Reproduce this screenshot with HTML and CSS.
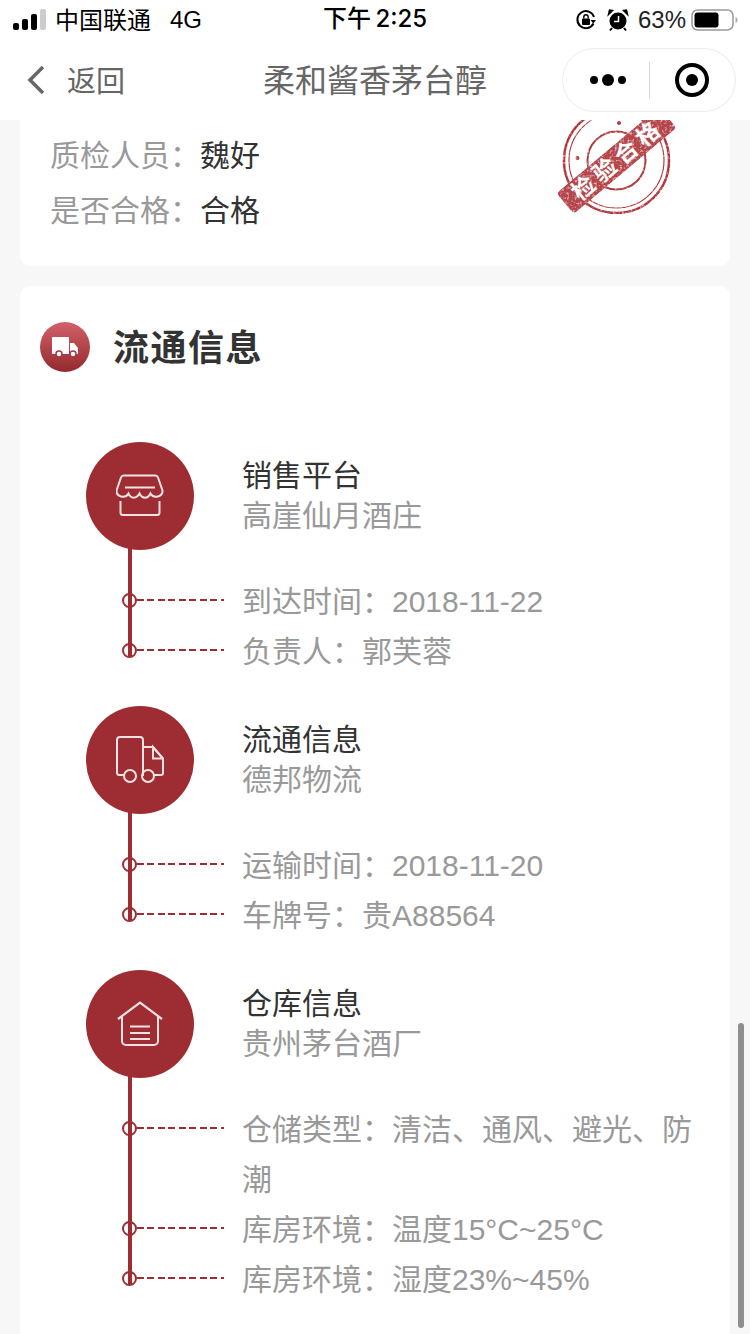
FILE: index.html
```html
<!DOCTYPE html>
<html lang="zh-CN">
<head>
    <meta charset="UTF-8">
    <meta name="viewport" content="width=device-width, initial-scale=1.0">
    <title>柔和酱香茅台醇</title>
    <link rel="stylesheet" href="styles.css">
</head>
<body>
<div class="page">
    <!-- Status bar + nav -->
    <header class="top">
        <div class="status">
            <div class="status-left">
                <svg class="signal" width="34" height="22" viewBox="0 0 34 22">
                    <rect x="0" y="14" width="6" height="7" rx="2" fill="#000"/>
                    <rect x="9" y="10" width="6" height="11" rx="2" fill="#000"/>
                    <rect x="18" y="5" width="6" height="16" rx="2" fill="#000"/>
                    <rect x="27" y="0" width="6" height="21" rx="2" fill="#ccc"/>
                </svg>
                <span class="carrier">中国联通</span>
                <span class="net">4G</span>
            </div>
            <div class="status-time">下午 2:25</div>
            <div class="status-right">
                <svg width="22" height="22" viewBox="0 0 22 22" fill="none">
                    <path d="M18.5 14.5A8.5 8.5 0 1 1 19 8" stroke="#000" stroke-width="2"/>
                    <path d="M15.5 11h5.5l-2.7 3.6z" fill="#000"/>
                    <rect x="7" y="9.5" width="8" height="6.5" rx="1" fill="#000"/>
                    <path d="M8.8 9.5V8a2.2 2.2 0 0 1 4.4 0v1.5" stroke="#000" stroke-width="1.4"/>
                </svg>
                <svg class="alarm" width="24" height="24" viewBox="0 0 24 24" fill="none">
                    <circle cx="12" cy="13" r="8.5" fill="#000"/>
                    <path d="M2.5 6.5L6.5 2.5L3.5 2zM21.5 6.5L17.5 2.5L20.5 2z" fill="#000" stroke="#000" stroke-width="1.5"/>
                    <path d="M6 20l-2 2.5M18 20l2 2.5" stroke="#000" stroke-width="2"/>
                    <path d="M12.5 8v5.5H8" stroke="#fff" stroke-width="1.5"/>
                </svg>
                <span class="pct">63%</span>
                <svg width="47" height="22" viewBox="0 0 47 22" fill="none">
                    <rect x="1" y="1" width="41" height="20" rx="5.5" stroke="#999" stroke-width="1.5"/>
                    <rect x="3.5" y="3.5" width="24" height="15" rx="3" fill="#000"/>
                    <path d="M44.5 8v6c1.5-.6 2-1.8 2-3s-.5-2.400-2-3z" fill="#aaa"/>
                </svg>
            </div>
        </div>
        <nav class="nav">
            <div class="back">
                <svg width="20" height="30" viewBox="0 0 20 30" fill="none">
                    <path d="M17 2L4 15l13 13" stroke="#666" stroke-width="3.500"/>
                </svg>
                <span>返回</span>
            </div>
            <div class="nav-title">柔和酱香茅台醇</div>
            <div class="capsule">
                <div class="capsule-side">
                    <svg width="42" height="16" viewBox="0 0 42 16">
                        <circle cx="9" cy="8" r="4" fill="#000"/>
                        <circle cx="23" cy="8" r="6" fill="#000"/>
                        <circle cx="37" cy="8" r="4" fill="#000"/>
                    </svg>
                </div>
                <div class="capsule-line"></div>
                <div class="capsule-side">
                    <svg width="36" height="36" viewBox="0 0 36 36" fill="none">
                        <circle cx="18" cy="18" r="15" stroke="#000" stroke-width="4"/>
                        <circle cx="18" cy="18" r="6" fill="#000"/>
                    </svg>
                </div>
            </div>
        </nav>
    </header>

    <main>
        <!-- Inspection card, scrolled under the nav -->
        <section class="card card-check">
            <div class="check-row"><span class="check-key">质检人员&#xFF1A;</span><span class="check-val">魏好</span></div>
            <div class="check-row"><span class="check-key">是否合格&#xFF1A;</span><span class="check-val">合格</span></div>
            <svg class="stamp" width="170" height="120" viewBox="0 0 170 120" fill="none">
                <defs>
                    <filter id="worn" x="0" y="0" width="100%" height="100%">
                        <feTurbulence type="fractalNoise" baseFrequency="0.4" numOctaves="2" seed="4"/>
                        <feColorMatrix type="matrix" values="0 0 0 0 0  0 0 0 0 0  0 0 0 0 0  0 0 0 -2 2"/>
                        <feComposite in="SourceGraphic" operator="in"/>
                    </filter>
                </defs>
                <g filter="url(#worn)">
                    <circle cx="86.500" cy="50.500" r="52.500" stroke="#b0393e" stroke-width="2.500"/>
                    <circle cx="86.500" cy="50.500" r="47.500" stroke="#b0393e" stroke-width="1.200"/>
                    <circle cx="86.500" cy="50.500" r="29" stroke="#b0393e" stroke-width="2"/>
                    <circle cx="89" cy="13" r="2" fill="#b0393e"/>
                    <circle cx="47.500" cy="48" r="2" fill="#b0393e"/>
                    <rect x="19.500" y="37" width="134" height="27" rx="4" fill="#b5444a" transform="rotate(-40 86.500 50.500)"/>
                </g>
                <text class="stamp-text" x="88" y="58.500" text-anchor="middle" transform="rotate(-40 86.500 50.500)">检验合格</text>
            </svg>
        </section>

        <section class="card card-flow">
            <div class="flow-head">
                <svg width="50" height="50" viewBox="0 0 50 50">
                    <defs>
                        <linearGradient id="badge" x1="0" y1="0" x2="0" y2="1">
                            <stop offset="0" stop-color="#d2606a"/>
                            <stop offset="1" stop-color="#932a2e"/>
                        </linearGradient>
                    </defs>
                    <circle cx="25" cy="25" r="25" fill="url(#badge)"/>
                    <path d="M12 16a1 1 0 0 1 1-1h16v17H13a1 1 0 0 1-1-1zM30 21h4l4 5v6h-8z" fill="#fff"/>
                    <circle cx="19" cy="32" r="3" fill="#fff" stroke="#a9383e" stroke-width="1.500"/>
                    <circle cx="33" cy="32" r="3" fill="#fff" stroke="#a9383e" stroke-width="1.500"/>
                </svg>
                <h2>流通信息</h2>
            </div>

            <div class="step">
                <div class="step-head">
                    <div class="step-icon">
                        <svg width="48" height="44" viewBox="0 0 48 44" fill="none">
                            <path d="M8 1.500h31a3 3 0 0 1 3 2l4.500 13c.5 6-8.500 9-12 3-2.500 5.500-8.500 5.500-11 0-3 5.500-9 5.500-11 0-3.500 6-12.500 3-12-3L5 3.500a3 3 0 0 1 3-2z" stroke="#f5e3e3" stroke-width="2"/>
                            <path d="M9 13.500h30" stroke="#f5e3e3" stroke-width="2"/>
                            <path d="M4.500 27v11.500a2.500 2.500 0 0 0 2.500 2.500h34a2.500 2.500 0 0 0 2.500-2.500V27" stroke="#f5e3e3" stroke-width="2"/>
                        </svg>
                    </div>
                    <div class="step-text">
                        <div class="step-title">销售平台</div>
                        <div class="step-sub">高崖仙月酒庄</div>
                    </div>
                </div>
                <div class="step-row"><div class="mark"><i class="ring"></i><i class="dash"></i></div><div class="row-text">到达时间&#xFF1A;2018-11-22</div></div>
                <div class="step-row"><div class="mark"><i class="ring"></i><i class="dash"></i></div><div class="row-text">负责人&#xFF1A;郭芙蓉</div></div>
            </div>

            <div class="step">
                <div class="step-head">
                    <div class="step-icon">
                        <svg width="48" height="48" viewBox="0 0 48 48" fill="none">
                            <path d="M8 39H3.500A2.500 2.500 0 0 1 1 36.500V4a3 3 0 0 1 3-3h20a3 3 0 0 1 3 3v35h-1" stroke="#f5e3e3" stroke-width="2"/>
                            <path d="M27 11h10l10 11.500V37a2 2 0 0 1-2 2h-7" stroke="#f5e3e3" stroke-width="2"/>
                            <path d="M37 11v11.500h10z" stroke="#f5e3e3" stroke-width="2"/>
                            <circle cx="14" cy="40" r="6" stroke="#f5e3e3" stroke-width="2"/>
                            <circle cx="32" cy="40" r="6" stroke="#f5e3e3" stroke-width="2"/>
                        </svg>
                    </div>
                    <div class="step-text">
                        <div class="step-title">流通信息</div>
                        <div class="step-sub">德邦物流</div>
                    </div>
                </div>
                <div class="step-row"><div class="mark"><i class="ring"></i><i class="dash"></i></div><div class="row-text">运输时间&#xFF1A;2018-11-20</div></div>
                <div class="step-row"><div class="mark"><i class="ring"></i><i class="dash"></i></div><div class="row-text">车牌号&#xFF1A;贵A88564</div></div>
            </div>

            <div class="step">
                <div class="step-head">
                    <div class="step-icon">
                        <svg width="46" height="46" viewBox="0 0 46 46" fill="none">
                            <path d="M1 18L23 1.500 45 18" stroke="#f5e3e3" stroke-width="2.200"/>
                            <path d="M5 15v25a4 4 0 0 0 4 4h28a4 4 0 0 0 4-4V15" stroke="#f5e3e3" stroke-width="2"/>
                            <path d="M13 25.500h20M13 32h20M13 38h20" stroke="#f5e3e3" stroke-width="2"/>
                        </svg>
                    </div>
                    <div class="step-text">
                        <div class="step-title">仓库信息</div>
                        <div class="step-sub">贵州茅台酒厂</div>
                    </div>
                </div>
                <div class="step-row"><div class="mark"><i class="ring"></i><i class="dash"></i></div><div class="row-text">仓储类型&#xFF1A;清洁、通风、避光、防潮</div></div>
                <div class="step-row"><div class="mark"><i class="ring"></i><i class="dash"></i></div><div class="row-text">库房环境&#xFF1A;温度15°C~25°C</div></div>
                <div class="step-row"><div class="mark"><i class="ring"></i><i class="dash"></i></div><div class="row-text">库房环境&#xFF1A;湿度23%~45%</div></div>
            </div>
        </section>
    </main>

    <div class="scrollbar"></div>
</div>
</body>
</html>
```

FILE: styles.css
```css
/* General */
body {
    margin: 0;
    font-family: "Liberation Sans", "Noto Sans CJK SC", sans-serif;
    color: #333;
}

.page {
    position: relative;
    width: 750px;
    height: 1334px;
    overflow: hidden;
    background: #f7f7f7;
}

/* Status bar */
.top {
    position: relative;
    z-index: 2;
    height: 120px;
    background: #fff;
}

.status {
    position: relative;
    display: flex;
    justify-content: space-between;
    align-items: center;
    height: 40px;
    padding: 0 13px;
    font-size: 24px;
    color: #000;
}

.status-left {
    display: flex;
    align-items: center;
}

.signal {
    margin-right: 8px;
}

.carrier {
    margin-top: -3px;
}

.net {
    margin-left: 19px;
}

.status-time {
    position: absolute;
    left: 323px;
    top: -1px;
    line-height: 40px;
    font-family: Inter, "Noto Sans CJK SC", sans-serif;
    font-weight: 500;
    word-spacing: -2px;
}

.status-right {
    display: flex;
    align-items: center;
    margin-right: -1px;
}

.alarm {
    margin-left: 9px;
}

.pct {
    margin: 0 5px 0 8px;
    color: #222;
}

/* Nav */
.nav {
    position: relative;
    display: flex;
    align-items: center;
    height: 80px;
    padding: 0 14px 0 26px;
    color: #666;
}

.back {
    display: flex;
    align-items: center;
    font-size: 29px;
}

.back span {
    margin: -2px 0 0 21px;
}

.nav-title {
    position: absolute;
    left: 0;
    right: 0;
    top: 19px;
    text-align: center;
    font-size: 32px;
    line-height: 44px;
}

.capsule {
    display: flex;
    align-items: center;
    width: 172px;
    height: 62px;
    margin-left: auto;
    background: #fff;
    border: 1px solid #ececec;
    border-radius: 32px;
}

.capsule-side {
    display: flex;
    flex: 1;
    justify-content: center;
}

.capsule-line {
    width: 1px;
    height: 37px;
    background: #d8d8d8;
}

/* Cards */
.card {
    position: relative;
    margin: 0 20px;
    background: #fff;
}

.card-check {
    height: 138px;
    padding: 8px 0 0 30px;
    border-radius: 0 0 10px 10px;
}

.check-row {
    font-size: 30px;
    line-height: 55px;
}

.check-key {
    color: #999;
}

.check-val {
    color: #333;
}

.stamp {
    position: absolute;
    left: 510px;
    top: -10px;
}

.stamp-text {
    font-family: "Noto Sans CJK SC", sans-serif;
    font-size: 23px;
    font-weight: 700;
    letter-spacing: 5px;
    fill: #fff;
}

.card-flow {
    margin-top: 20px;
    height: 1100px;
    padding-top: 36px;
    border-radius: 10px;
}

.flow-head {
    display: flex;
    align-items: center;
    margin-left: 20px;
}

.flow-head h2 {
    margin: 0 0 0 23px;
    padding-top: 4px;
    font-size: 36px;
    line-height: 46px;
    font-weight: 700;
    letter-spacing: 1.500px;
    color: #333;
}

/* Timeline */
.step {
    position: relative;
    margin: 70px 20px 0 66px;
}

.step + .step {
    margin-top: 29px;
}

.step::before {
    content: "";
    position: absolute;
    left: 42px;
    top: 100px;
    bottom: 20px;
    width: 4px;
    background: #9e2d33;
}

.step-head {
    position: relative;
    display: flex;
    gap: 49px;
    margin-bottom: 27px;
}

.step-icon {
    display: flex;
    flex: 0 0 108px;
    align-items: center;
    justify-content: center;
    height: 108px;
    border-radius: 50%;
    background: #9e2d33;
}

.step-text {
    margin-left: -1px;
    padding-top: 14px;
    font-size: 30px;
    line-height: 40px;
}

.step-title {
    color: #333;
}

.step-sub {
    color: #999;
}

.step-row {
    position: relative;
    display: flex;
    padding-left: 36px;
}

.mark {
    display: flex;
    flex: 0 0 121px;
    align-items: center;
    height: 46px;
}

.ring {
    box-sizing: border-box;
    width: 15px;
    height: 15px;
    border: 2px solid #9e2d33;
    border-radius: 50%;
}

.dash {
    width: 87px;
    height: 2px;
    background: repeating-linear-gradient(90deg, #9e2d33 0 7px, transparent 7px 10.500px);
}

.row-text {
    flex: 1;
    margin-left: -1px;
    font-size: 30px;
    line-height: 50px;
    color: #999;
}

.scrollbar {
    position: absolute;
    left: 738px;
    top: 1023px;
    width: 6px;
    height: 305px;
    border-radius: 3px;
    background: #8f8f8f;
}
```
